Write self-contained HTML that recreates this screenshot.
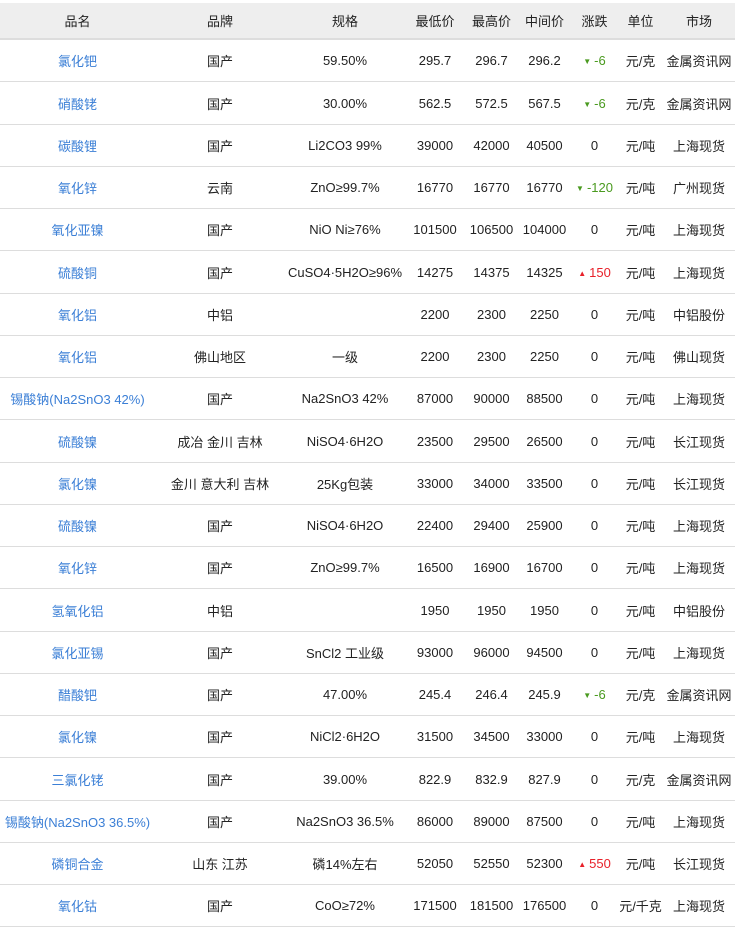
<!DOCTYPE html>
<html><head><meta charset="utf-8"><style>
*{margin:0;padding:0;box-sizing:border-box}
body{width:735px;height:924px;overflow:hidden;background:#fff;font-family:"Liberation Sans","Noto Sans CJK SC",sans-serif;font-size:13px;color:#222;position:relative}
.r{position:absolute;left:0;width:735px;display:flex;align-items:center;border-bottom:1px solid #ddd}
.r div{text-align:center;white-space:nowrap}
.c1{width:155px}.c2{width:130px}.c3{width:120px}.c4{width:60px}.c5{width:53px}.c6{width:53px}.c7{width:47px}.c8{width:45px}.c9{width:72px}
.r .c1{color:#3b7fd6}
.h{top:3px;height:37px;background:#eee;border-bottom:2px solid #ddd}
.dn{color:#4a9a1f}.up{color:#e8212a}
.dn i,.up i{font-style:normal;font-size:8px;vertical-align:1px;margin-right:3px}
</style></head><body>
<div class="r h"><div class="c1" style="color:#222">品名</div><div class="c2">品牌</div><div class="c3">规格</div><div class="c4">最低价</div><div class="c5">最高价</div><div class="c6">中间价</div><div class="c7">涨跌</div><div class="c8">单位</div><div class="c9">市场</div></div>
<div class="r" style="top:40px;height:42px"><div class="c1">氯化钯</div><div class="c2">国产</div><div class="c3">59.50%</div><div class="c4">295.7</div><div class="c5">296.7</div><div class="c6">296.2</div><div class="c7 dn"><i>▼</i>-6</div><div class="c8">元/克</div><div class="c9">金属资讯网</div></div>
<div class="r" style="top:82px;height:43px"><div class="c1">硝酸铑</div><div class="c2">国产</div><div class="c3">30.00%</div><div class="c4">562.5</div><div class="c5">572.5</div><div class="c6">567.5</div><div class="c7 dn"><i>▼</i>-6</div><div class="c8">元/克</div><div class="c9">金属资讯网</div></div>
<div class="r" style="top:125px;height:42px"><div class="c1">碳酸锂</div><div class="c2">国产</div><div class="c3">Li2CO3 99%</div><div class="c4">39000</div><div class="c5">42000</div><div class="c6">40500</div><div class="c7">0</div><div class="c8">元/吨</div><div class="c9">上海现货</div></div>
<div class="r" style="top:167px;height:42px"><div class="c1">氧化锌</div><div class="c2">云南</div><div class="c3">ZnO≥99.7%</div><div class="c4">16770</div><div class="c5">16770</div><div class="c6">16770</div><div class="c7 dn"><i>▼</i>-120</div><div class="c8">元/吨</div><div class="c9">广州现货</div></div>
<div class="r" style="top:209px;height:42px"><div class="c1">氧化亚镍</div><div class="c2">国产</div><div class="c3">NiO Ni≥76%</div><div class="c4">101500</div><div class="c5">106500</div><div class="c6">104000</div><div class="c7">0</div><div class="c8">元/吨</div><div class="c9">上海现货</div></div>
<div class="r" style="top:251px;height:43px"><div class="c1">硫酸铜</div><div class="c2">国产</div><div class="c3">CuSO4·5H2O≥96%</div><div class="c4">14275</div><div class="c5">14375</div><div class="c6">14325</div><div class="c7 up"><i>▲</i>150</div><div class="c8">元/吨</div><div class="c9">上海现货</div></div>
<div class="r" style="top:294px;height:42px"><div class="c1">氧化铝</div><div class="c2">中铝</div><div class="c3"></div><div class="c4">2200</div><div class="c5">2300</div><div class="c6">2250</div><div class="c7">0</div><div class="c8">元/吨</div><div class="c9">中铝股份</div></div>
<div class="r" style="top:336px;height:42px"><div class="c1">氧化铝</div><div class="c2">佛山地区</div><div class="c3">一级</div><div class="c4">2200</div><div class="c5">2300</div><div class="c6">2250</div><div class="c7">0</div><div class="c8">元/吨</div><div class="c9">佛山现货</div></div>
<div class="r" style="top:378px;height:42px"><div class="c1">锡酸钠(Na2SnO3 42%)</div><div class="c2">国产</div><div class="c3">Na2SnO3 42%</div><div class="c4">87000</div><div class="c5">90000</div><div class="c6">88500</div><div class="c7">0</div><div class="c8">元/吨</div><div class="c9">上海现货</div></div>
<div class="r" style="top:420px;height:43px"><div class="c1">硫酸镍</div><div class="c2">成冶 金川 吉林</div><div class="c3">NiSO4·6H2O</div><div class="c4">23500</div><div class="c5">29500</div><div class="c6">26500</div><div class="c7">0</div><div class="c8">元/吨</div><div class="c9">长江现货</div></div>
<div class="r" style="top:463px;height:42px"><div class="c1">氯化镍</div><div class="c2">金川 意大利 吉林</div><div class="c3">25Kg包装</div><div class="c4">33000</div><div class="c5">34000</div><div class="c6">33500</div><div class="c7">0</div><div class="c8">元/吨</div><div class="c9">长江现货</div></div>
<div class="r" style="top:505px;height:42px"><div class="c1">硫酸镍</div><div class="c2">国产</div><div class="c3">NiSO4·6H2O</div><div class="c4">22400</div><div class="c5">29400</div><div class="c6">25900</div><div class="c7">0</div><div class="c8">元/吨</div><div class="c9">上海现货</div></div>
<div class="r" style="top:547px;height:42px"><div class="c1">氧化锌</div><div class="c2">国产</div><div class="c3">ZnO≥99.7%</div><div class="c4">16500</div><div class="c5">16900</div><div class="c6">16700</div><div class="c7">0</div><div class="c8">元/吨</div><div class="c9">上海现货</div></div>
<div class="r" style="top:589px;height:43px"><div class="c1">氢氧化铝</div><div class="c2">中铝</div><div class="c3"></div><div class="c4">1950</div><div class="c5">1950</div><div class="c6">1950</div><div class="c7">0</div><div class="c8">元/吨</div><div class="c9">中铝股份</div></div>
<div class="r" style="top:632px;height:42px"><div class="c1">氯化亚锡</div><div class="c2">国产</div><div class="c3">SnCl2 工业级</div><div class="c4">93000</div><div class="c5">96000</div><div class="c6">94500</div><div class="c7">0</div><div class="c8">元/吨</div><div class="c9">上海现货</div></div>
<div class="r" style="top:674px;height:42px"><div class="c1">醋酸钯</div><div class="c2">国产</div><div class="c3">47.00%</div><div class="c4">245.4</div><div class="c5">246.4</div><div class="c6">245.9</div><div class="c7 dn"><i>▼</i>-6</div><div class="c8">元/克</div><div class="c9">金属资讯网</div></div>
<div class="r" style="top:716px;height:42px"><div class="c1">氯化镍</div><div class="c2">国产</div><div class="c3">NiCl2·6H2O</div><div class="c4">31500</div><div class="c5">34500</div><div class="c6">33000</div><div class="c7">0</div><div class="c8">元/吨</div><div class="c9">上海现货</div></div>
<div class="r" style="top:758px;height:43px"><div class="c1">三氯化铑</div><div class="c2">国产</div><div class="c3">39.00%</div><div class="c4">822.9</div><div class="c5">832.9</div><div class="c6">827.9</div><div class="c7">0</div><div class="c8">元/克</div><div class="c9">金属资讯网</div></div>
<div class="r" style="top:801px;height:42px"><div class="c1">锡酸钠(Na2SnO3 36.5%)</div><div class="c2">国产</div><div class="c3">Na2SnO3 36.5%</div><div class="c4">86000</div><div class="c5">89000</div><div class="c6">87500</div><div class="c7">0</div><div class="c8">元/吨</div><div class="c9">上海现货</div></div>
<div class="r" style="top:843px;height:42px"><div class="c1">磷铜合金</div><div class="c2">山东 江苏</div><div class="c3">磷14%左右</div><div class="c4">52050</div><div class="c5">52550</div><div class="c6">52300</div><div class="c7 up"><i>▲</i>550</div><div class="c8">元/吨</div><div class="c9">长江现货</div></div>
<div class="r" style="top:885px;height:42px"><div class="c1">氧化钴</div><div class="c2">国产</div><div class="c3">CoO≥72%</div><div class="c4">171500</div><div class="c5">181500</div><div class="c6">176500</div><div class="c7">0</div><div class="c8">元/千克</div><div class="c9">上海现货</div></div>
</body></html>
